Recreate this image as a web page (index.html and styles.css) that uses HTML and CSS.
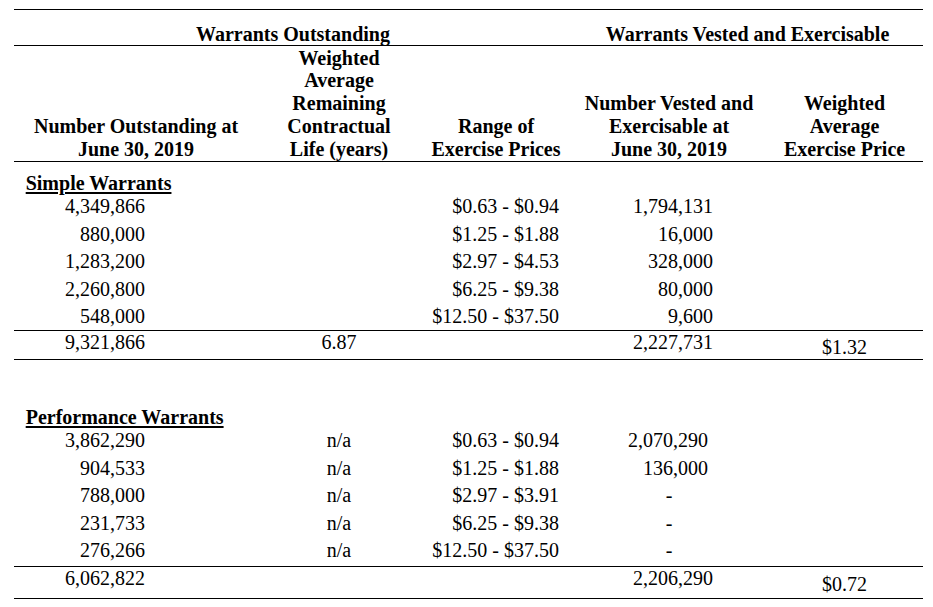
FILE: index.html
```html
<!DOCTYPE html>
<html lang="en">
<head>
<meta charset="utf-8">
<title>Warrants</title>
<link rel="stylesheet" href="styles.css">
</head>
<body>
<table class="warrants">
  <colgroup>
    <col class="c1"><col class="c2"><col class="c3"><col class="c4"><col class="c5">
  </colgroup>
  <thead>
    <tr class="group">
      <th colspan="3">Warrants Outstanding</th>
      <th colspan="2">Warrants Vested and Exercisable</th>
    </tr>
    <tr class="cols">
      <th>Number Outstanding at<br>June 30, 2019</th>
      <th>Weighted<br>Average<br>Remaining<br>Contractual<br>Life (years)</th>
      <th>Range of<br>Exercise Prices</th>
      <th>Number Vested and<br>Exercisable at<br>June 30, 2019</th>
      <th>Weighted<br>Average<br>Exercise Price</th>
    </tr>
  </thead>
  <tbody>
    <tr class="label">
      <td colspan="5"><span>Simple Warrants</span></td>
    </tr>
    <tr class="row">
      <td class="num">4,349,866</td><td class="mid"></td><td class="price">$0.63 - $0.94</td><td class="vest">1,794,131</td><td class="mid"></td>
    </tr>
    <tr class="row">
      <td class="num">880,000</td><td class="mid"></td><td class="price">$1.25 - $1.88</td><td class="vest">16,000</td><td class="mid"></td>
    </tr>
    <tr class="row">
      <td class="num">1,283,200</td><td class="mid"></td><td class="price">$2.97 - $4.53</td><td class="vest">328,000</td><td class="mid"></td>
    </tr>
    <tr class="row">
      <td class="num">2,260,800</td><td class="mid"></td><td class="price">$6.25 - $9.38</td><td class="vest">80,000</td><td class="mid"></td>
    </tr>
    <tr class="row">
      <td class="num">548,000</td><td class="mid"></td><td class="price">$12.50 - $37.50</td><td class="vest">9,600</td><td class="mid"></td>
    </tr>
    <tr class="total total-simple">
      <td class="num">9,321,866</td><td class="mid">6.87</td><td class="price"></td><td class="vest">2,227,731</td><td class="mid avg">$1.32</td>
    </tr>
    <tr class="label label-perf">
      <td colspan="5"><span>Performance Warrants</span></td>
    </tr>
    <tr class="row">
      <td class="num">3,862,290</td><td class="mid">n/a</td><td class="price">$0.63 - $0.94</td><td class="vest vest-perf">2,070,290</td><td class="mid"></td>
    </tr>
    <tr class="row">
      <td class="num">904,533</td><td class="mid">n/a</td><td class="price">$1.25 - $1.88</td><td class="vest vest-perf">136,000</td><td class="mid"></td>
    </tr>
    <tr class="row">
      <td class="num">788,000</td><td class="mid">n/a</td><td class="price">$2.97 - $3.91</td><td class="mid">-</td><td class="mid"></td>
    </tr>
    <tr class="row">
      <td class="num">231,733</td><td class="mid">n/a</td><td class="price">$6.25 - $9.38</td><td class="mid">-</td><td class="mid"></td>
    </tr>
    <tr class="row row-last">
      <td class="num">276,266</td><td class="mid">n/a</td><td class="price">$12.50 - $37.50</td><td class="mid">-</td><td class="mid"></td>
    </tr>
    <tr class="total total-perf">
      <td class="num">6,062,822</td><td class="mid"></td><td class="price"></td><td class="vest">2,206,290</td><td class="mid avg">$0.72</td>
    </tr>
  </tbody>
</table>
</body>
</html>
```
FILE: styles.css
```css
html, body {
  margin: 0;
  padding: 0;
  background: #ffffff;
}

body {
  font-family: "Liberation Serif", "Times New Roman", serif;
  font-size: 20px;
  color: #000000;
}

.warrants {
  margin: 9px 0 0 14px;
  width: 909px;
  table-layout: fixed;
  border-collapse: separate;
  border-spacing: 0;
}

.c1 { width: 244px; }
.c2 { width: 162px; }
.c3 { width: 152px; }
.c4 { width: 194px; }
.c5 { width: 157px; }

.warrants th,
.warrants td {
  padding: 0;
  white-space: nowrap;
}

.warrants th {
  font-weight: bold;
  text-align: center;
  vertical-align: bottom;
}

.group th {
  border-top: 1px solid #000;
  border-bottom: 1px solid #000;
  padding-top: 12.5px;
  line-height: 22.5px;
}

.cols th {
  border-bottom: 1px solid #000;
  padding-top: 0.5px;
  line-height: 22.9px;
}

.label td {
  padding: 10.5px 0 0 11.7px;
  line-height: 20px;
  font-weight: bold;
  text-align: left;
  vertical-align: top;
}

.label span {
  text-decoration: underline;
  text-decoration-thickness: 2px;
  text-underline-offset: 2px;
}

.label-perf td {
  padding-top: 46.5px;
}

.row td {
  line-height: 22.5px;
  padding-top: 2.5px;
  padding-bottom: 2.5px;
  vertical-align: top;
}

.row-last td {
  padding-bottom: 4.5px;
}

.num {
  text-align: right;
  padding-right: 113px !important;
}

.mid {
  text-align: center;
}

.price {
  text-align: right;
  padding-right: 13px !important;
}

.vest {
  text-align: right;
  padding-right: 53px !important;
}

.vest-perf {
  padding-right: 58px !important;
}

.total td {
  border-top: 1px solid #000;
  border-bottom: 1px solid #000;
  line-height: 22.5px;
  vertical-align: top;
}

.total-simple td {
  padding-top: 0;
  padding-bottom: 5.5px;
}

.total-simple .avg {
  padding-top: 5px;
  padding-bottom: 0.5px;
}

.total-perf td {
  padding-top: 0;
  padding-bottom: 8.5px;
}

.total-perf .avg {
  padding-top: 5.5px;
  padding-bottom: 3px;
}
```
